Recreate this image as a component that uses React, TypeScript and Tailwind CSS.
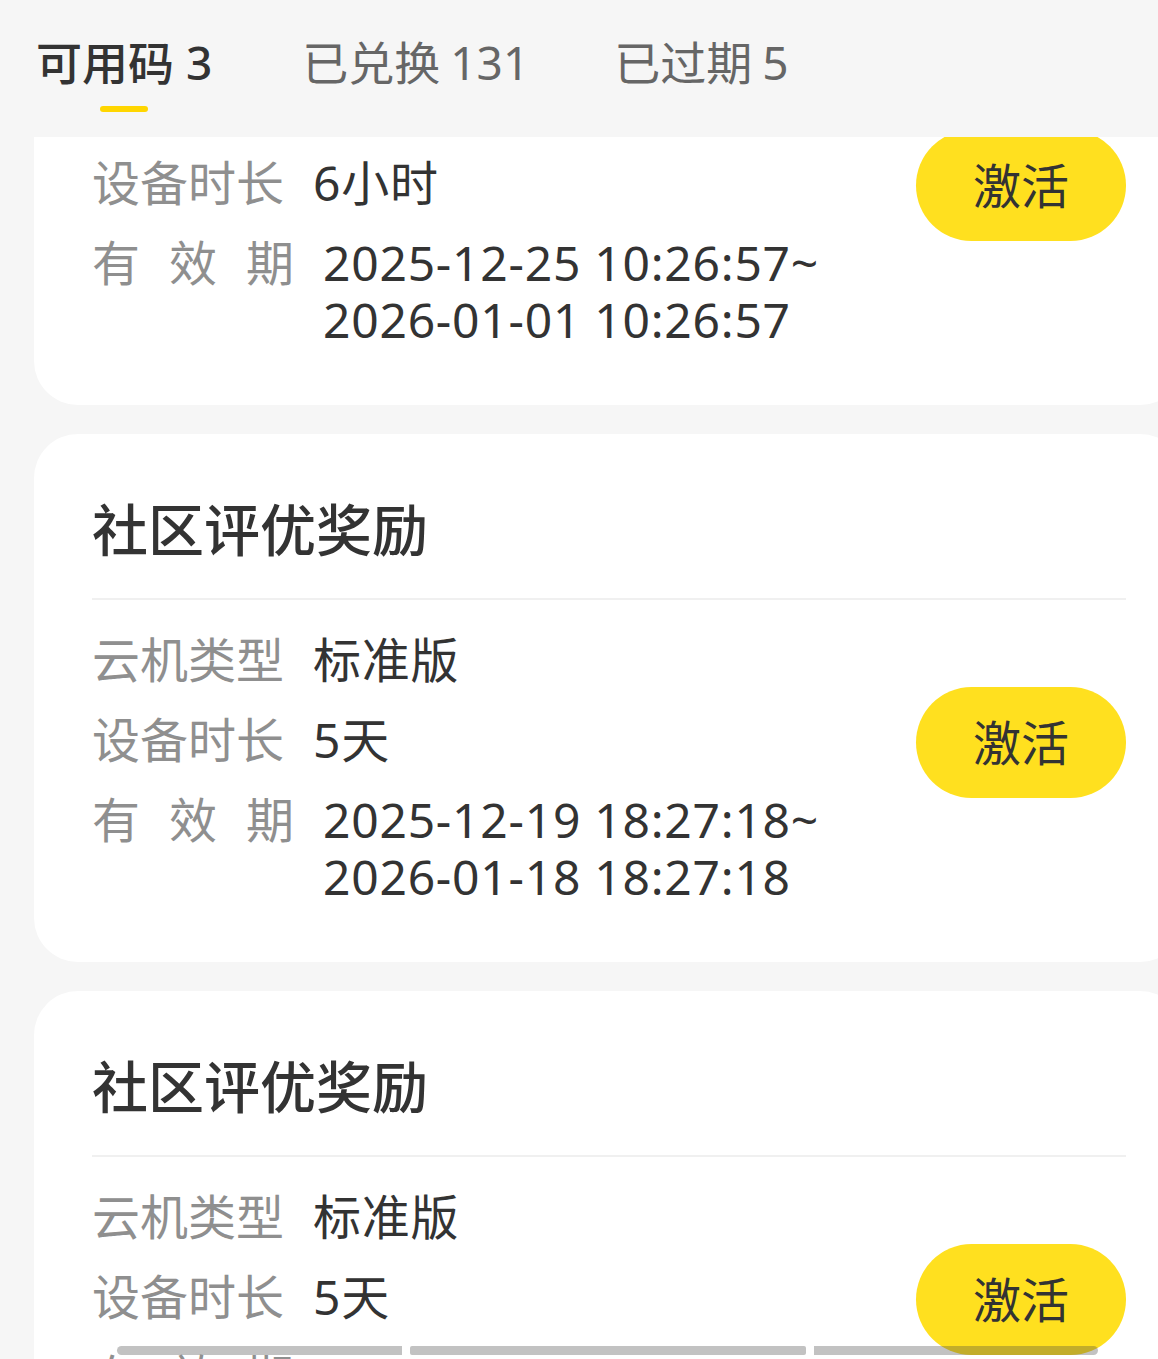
import React from "react";

type Coupon = {
  title: string;
  kind: string;
  duration: string;
  from: string;
  to: string;
};

const coupons: Coupon[] = [
  {
    title: "社区评优奖励",
    kind: "标准版",
    duration: "6小时",
    from: "2025-12-25 10:26:57~",
    to: "2026-01-01 10:26:57",
  },
  {
    title: "社区评优奖励",
    kind: "标准版",
    duration: "5天",
    from: "2025-12-19 18:27:18~",
    to: "2026-01-18 18:27:18",
  },
  {
    title: "社区评优奖励",
    kind: "标准版",
    duration: "5天",
    from: "2025-12-19 18:27:18~",
    to: "2026-01-18 18:27:18",
  },
];

const font = {
  fontFamily: '"Noto Sans", "Noto Sans CJK SC", sans-serif',
};

function Tabs() {
  return (
    <header className="h-[137px] shrink-0 flex pl-[36px] pt-[34px]">
      <div className="flex flex-col items-center">
        <span className="text-[46px] leading-[56px] font-medium text-[#333]">
          可用码<span className="ml-[12px]">3</span>
        </span>
        <span className="mt-[16px] w-[48px] h-[6px] rounded-full bg-[#ffd600]" />
      </div>
      <span className="ml-[90px] text-[46px] leading-[56px] text-[#666]">
        已兑换<span className="ml-[10px]">131</span>
      </span>
      <span className="ml-[85px] text-[46px] leading-[56px] text-[#666]">
        已过期<span className="ml-[10px]">5</span>
      </span>
    </header>
  );
}

function Row({ label, children }: { label: React.ReactNode; children: React.ReactNode }) {
  return (
    <div className="flex gap-[29px] text-[48px] leading-[57px]">
      <div className="text-[#8f8f8f] shrink-0">{label}</div>
      <div className="text-[#333] tracking-[0.75px]">{children}</div>
    </div>
  );
}

function CouponCard({ item }: { item: Coupon }) {
  return (
    <article className="w-[1150px] shrink-0 bg-white rounded-[44px] px-[58px] pt-[67px] pb-[57px]">
      <h2 className="text-[56px] leading-[57px] font-medium text-[#333]">{item.title}</h2>
      <div className="mt-[40px] h-[2px] bg-[#f0f0f0]" />
      <div className="mt-[31px] flex">
        <div className="flex-1 flex flex-col gap-[23px]">
          <Row label="云机类型">{item.kind}</Row>
          <Row label="设备时长">{item.duration}</Row>
          <Row
            label={
              <span className="flex gap-[29px]">
                <span>有</span>
                <span>效</span>
                <span>期</span>
              </span>
            }
          >
            <div>{item.from}</div>
            <div>{item.to}</div>
          </Row>
        </div>
        <button className="self-start mt-[56px] w-[210px] h-[111px] rounded-full bg-[#ffe01f] text-[48px] text-[#333]">
          激活
        </button>
      </div>
    </article>
  );
}

export default function App() {
  return (
    <div
      className="relative w-[1158px] h-[1359px] overflow-hidden bg-[#f6f6f6] flex flex-col"
      style={font}
    >
      <Tabs />
      <main className="flex-1 overflow-hidden">
        <div className="-mt-[260px] pl-[34px] flex flex-col gap-[29px]">
          {coupons.map((c, i) => (
            <CouponCard key={i} item={c} />
          ))}
        </div>
      </main>
      <div className="absolute left-[117px] bottom-[4px] flex gap-[8px]">
        <span className="w-[285px] h-[9px] rounded-l-full rounded-r-[2px] bg-[rgba(66,66,66,0.32)]" />
        <span className="w-[396px] h-[9px] rounded-[2px] bg-[rgba(66,66,66,0.32)]" />
        <span className="w-[284px] h-[9px] rounded-r-full rounded-l-[2px] bg-[rgba(66,66,66,0.32)]" />
      </div>
    </div>
  );
}
